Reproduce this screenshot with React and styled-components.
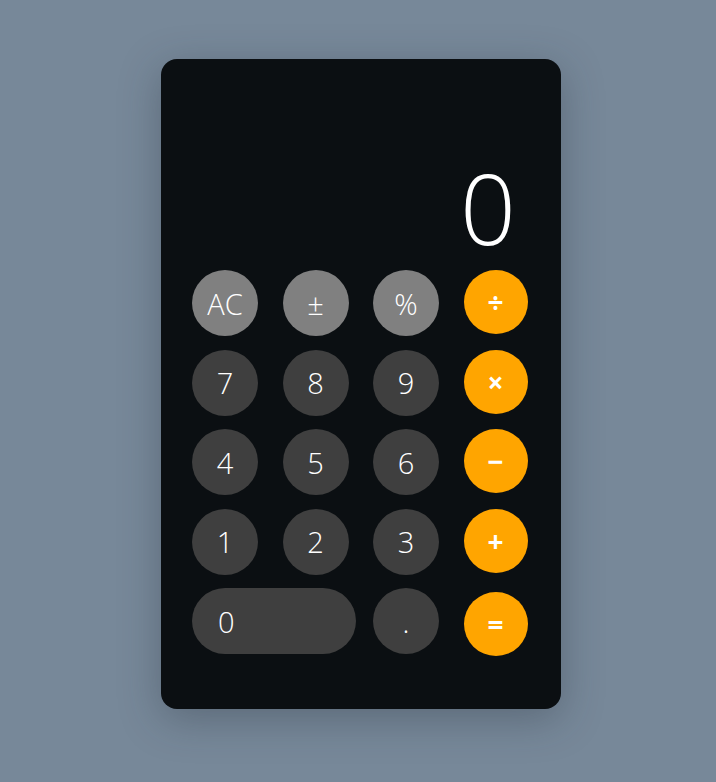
import * as React from 'react';
import styled, { createGlobalStyle } from 'styled-components';

const GlobalStyle = createGlobalStyle`
  html, body {
    margin: 0;
    padding: 0;
    background-color: #778899;
    font-family: "Open Sans", "Noto Sans", sans-serif;
  }
`;

const Page = styled.div`
  min-height: 782px;
  display: flex;
  justify-content: center;
  padding: 59px 0 0 6px;
  box-sizing: border-box;
`;

const Calculator = styled.div`
  width: 400px;
  height: 650px;
  background-color: #0b0f12;
  border-radius: 16px;
  box-shadow: 0 10px 40px rgba(40, 50, 60, 0.35);
  box-sizing: border-box;
  padding: 0 31px;
  display: flex;
  flex-direction: column;
`;

const Display = styled.div`
  height: 211px;
  display: flex;
  justify-content: flex-end;
  align-items: flex-end;
  color: #ffffff;
  font-size: 98px;
  font-weight: 300;
  line-height: 1;
  padding-right: 14px;
  padding-bottom: 14px;
  box-sizing: border-box;
`;

const Keypad = styled.div`
  display: grid;
  grid-template-columns: repeat(4, 66px);
  grid-auto-rows: 66px;
  column-gap: 24.5px;
  row-gap: 13.5px;
`;

const variants = {
  function: 'background-color: #808080; font-weight: 300;',
  digit: 'background-color: #3f3f3f; font-weight: 300;',
  operator: 'background-color: #ffa500; font-weight: 700; font-size: 28px; width: 64px; height: 64px;',
};

const Key = styled.button`
  border: none;
  outline: none;
  padding: 0;
  width: 66px;
  height: 66px;
  border-radius: 33px;
  color: #ffffff;
  font-family: "Open Sans", "Noto Sans", sans-serif;
  font-size: 29px;
  display: flex;
  align-items: center;
  justify-content: center;
  cursor: pointer;
  ${(props) => variants[props.variant]}
  ${(props) =>
    props.wide &&
    `
      grid-column: span 2;
      width: 164px;
      justify-content: flex-start;
      padding-left: 26px;
    `}
  ${(props) => props.drop && 'margin-top: 4px;'}
`;

const keys = [
  ['AC', 'function'],
  ['±', 'function'],
  ['%', 'function'],
  ['÷', 'operator'],
  ['7', 'digit'],
  ['8', 'digit'],
  ['9', 'digit'],
  ['×', 'operator'],
  ['4', 'digit'],
  ['5', 'digit'],
  ['6', 'digit'],
  ['−', 'operator'],
  ['1', 'digit'],
  ['2', 'digit'],
  ['3', 'digit'],
  ['+', 'operator'],
  ['0', 'digit', true],
  ['.', 'digit'],
  ['=', 'operator'],
];

export default function App() {
  const [value, setValue] = React.useState('0');

  const press = (label) => {
    if (label === 'AC') return setValue('0');
    if (/[0-9]/.test(label)) setValue((v) => (v === '0' ? label : v + label));
  };

  return (
    <Page>
      <GlobalStyle />
      <Calculator>
        <Display>{value}</Display>
        <Keypad>
          {keys.map(([label, variant, wide]) => (
            <Key
              key={label}
              variant={variant}
              wide={wide}
              drop={label === '='}
              onClick={() => press(label)}
            >
              {label}
            </Key>
          ))}
        </Keypad>
      </Calculator>
    </Page>
  );
}
